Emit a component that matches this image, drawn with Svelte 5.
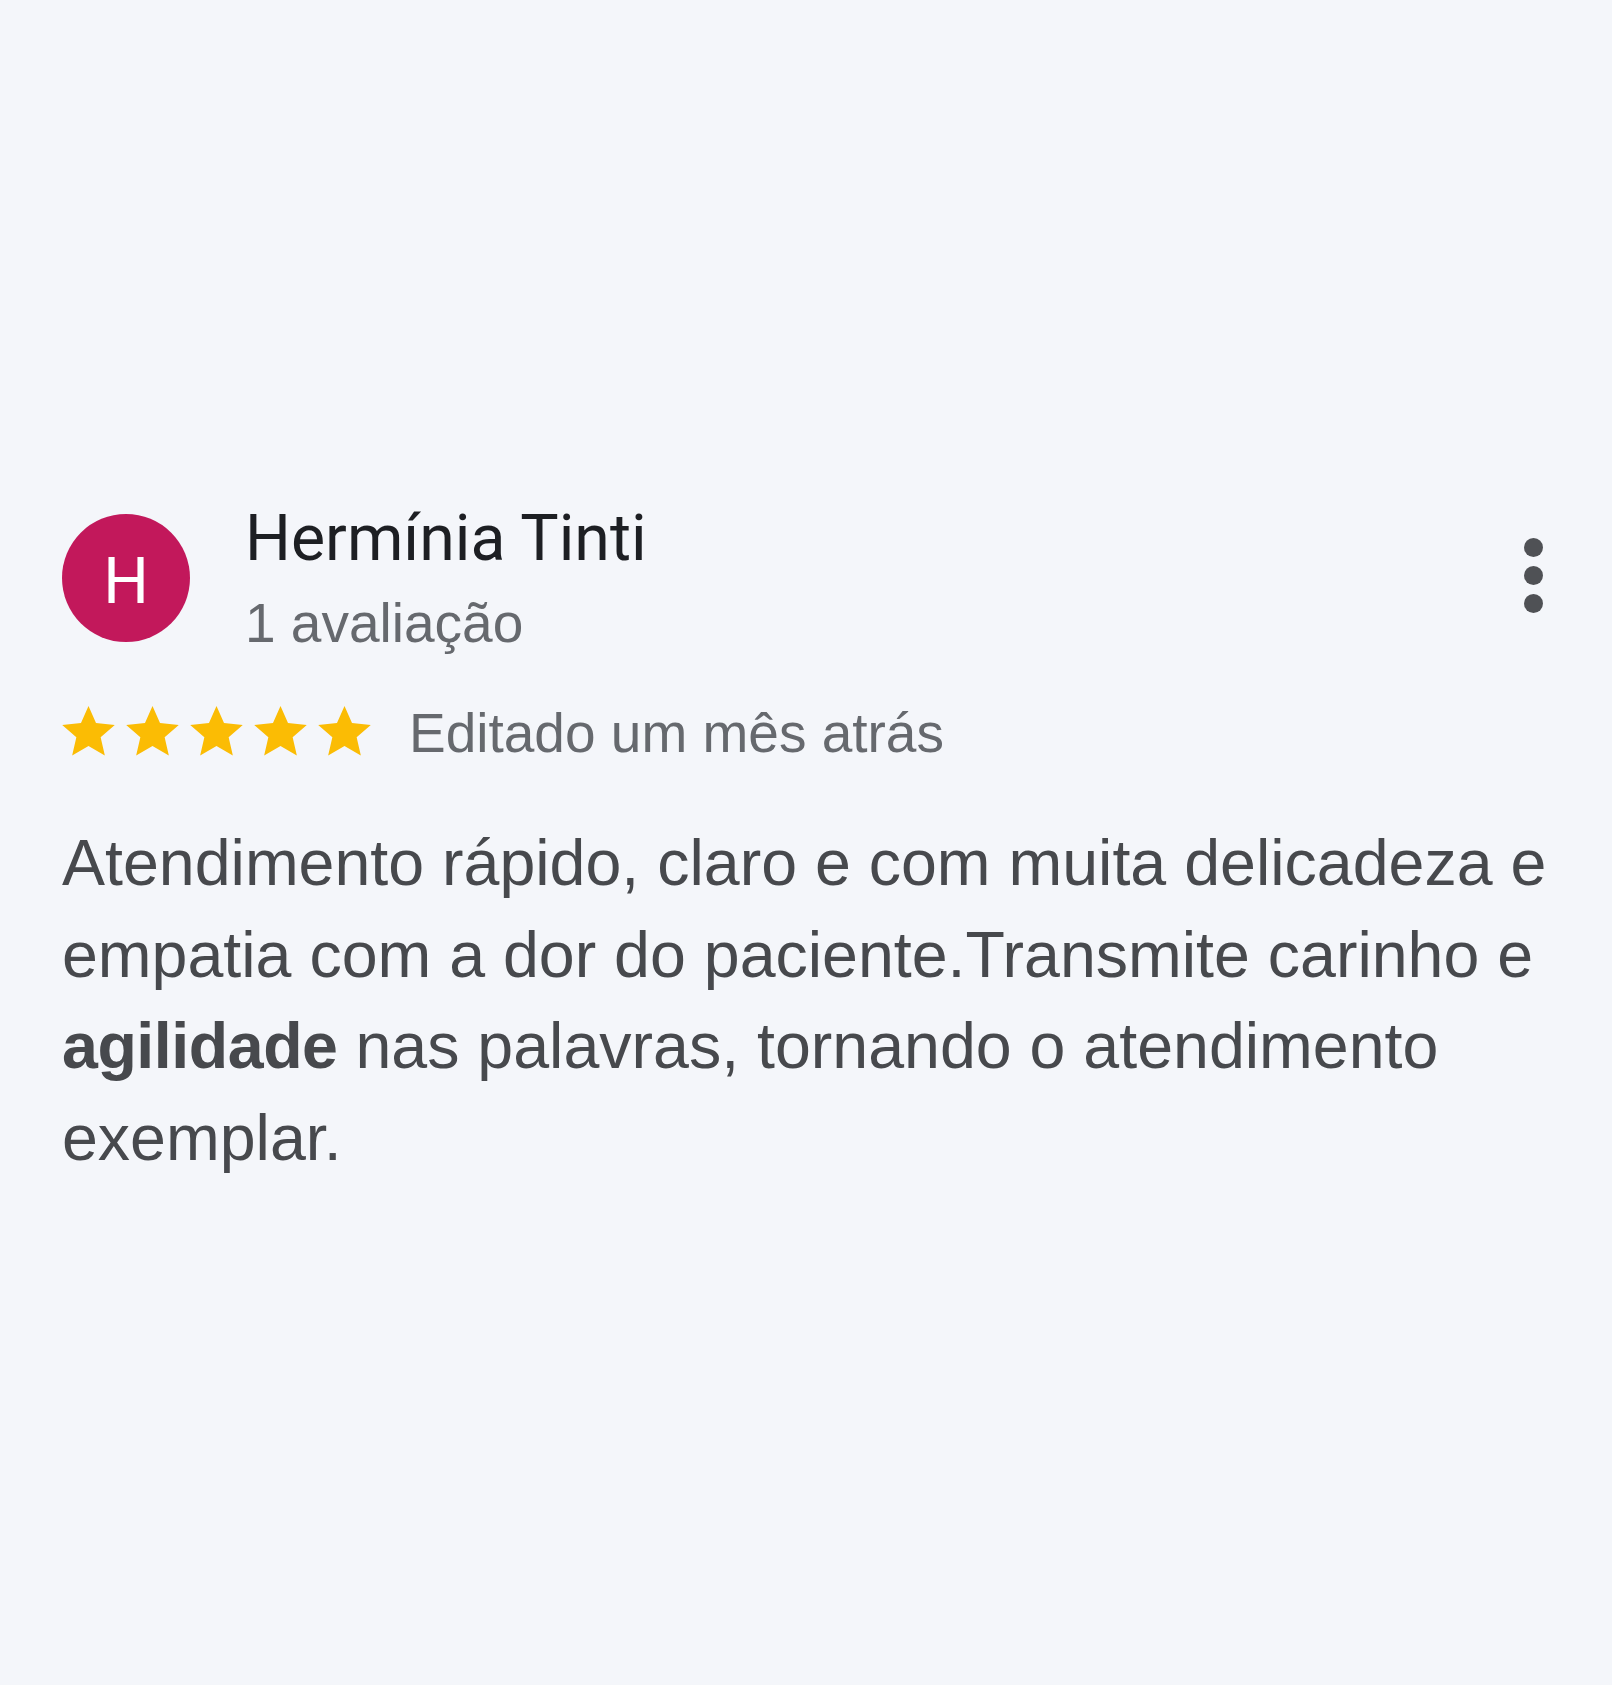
<script lang="ts">
	const stars = [1, 2, 3, 4, 5];
</script>

<main class="page">
	<article class="review">
		<header class="head">
			<div class="avatar">H</div>
			<div class="who">
				<div class="name">Hermínia Tinti</div>
				<div class="count">1 avaliação</div>
			</div>
			<div class="more" aria-label="Mais opções">
				<span></span>
				<span></span>
				<span></span>
			</div>
		</header>

		<div class="meta">
			<div class="stars">
				{#each stars as s (s)}
					<svg viewBox="0 0 24 24" class="star"><path d="M12 .4l3.4 7.8 8.5.8-6.4 5.6 1.9 8.3L12 18.6l-7.4 4.3 1.9-8.3L.1 9l8.5-.8z" /></svg>
				{/each}
			</div>
			<span class="when">Editado um mês atrás</span>
		</div>

		<p class="text">
			Atendimento rápido, claro e com muita delicadeza e empatia com a dor do paciente.Transmite carinho e <b>agilidade</b> nas palavras, tornando o atendimento exemplar.
		</p>
	</article>
</main>

<style>
	:global(body) {
		background: #f4f6fa;
	}

	.page {
		min-height: 1685px;
		box-sizing: border-box;
		padding: 503px 62px 0;
		font-family: "Liberation Sans", Arial, sans-serif;
		color: #47494d;
	}

	.head {
		display: flex;
		align-items: center;
		gap: 55px;
	}

	.avatar {
		width: 128px;
		height: 128px;
		box-sizing: border-box;
		padding-top: 6px;
		border-radius: 50%;
		background: #c2185b;
		color: #fff;
		font-family: Roboto, sans-serif;
		font-size: 64px;
		display: flex;
		align-items: center;
		justify-content: center;
		flex: none;
	}

	.who {
		flex: 1;
	}

	.name {
		font-family: Roboto, sans-serif;
		font-size: 64.4px;
		line-height: 70px;
		color: #1d1f23;
	}

	.count {
		font-size: 55px;
		line-height: 60px;
		margin-top: 20px;
		color: #66696e;
	}

	.more {
		display: flex;
		flex-direction: column;
		gap: 9px;
		margin: 0 7px 5px 0;
	}

	.more span {
		width: 19px;
		height: 19px;
		border-radius: 50%;
		background: #4f5155;
	}

	.meta {
		display: flex;
		align-items: center;
		gap: 38px;
		margin-top: 46px;
	}

	.stars {
		display: flex;
		gap: 11px;
	}

	.star {
		width: 53px;
		height: 53px;
		display: block;
		fill: #fbbc04;
	}

	.when {
		font-size: 55px;
		line-height: 60px;
		padding-top: 4px;
		color: #66696e;
	}

	.text {
		margin: 55px 0 0;
		font-size: 64.5px;
		line-height: 91.5px;
		width: 1500px;
	}

	.text b {
		font-weight: 700;
		letter-spacing: -0.45px;
	}
</style>
